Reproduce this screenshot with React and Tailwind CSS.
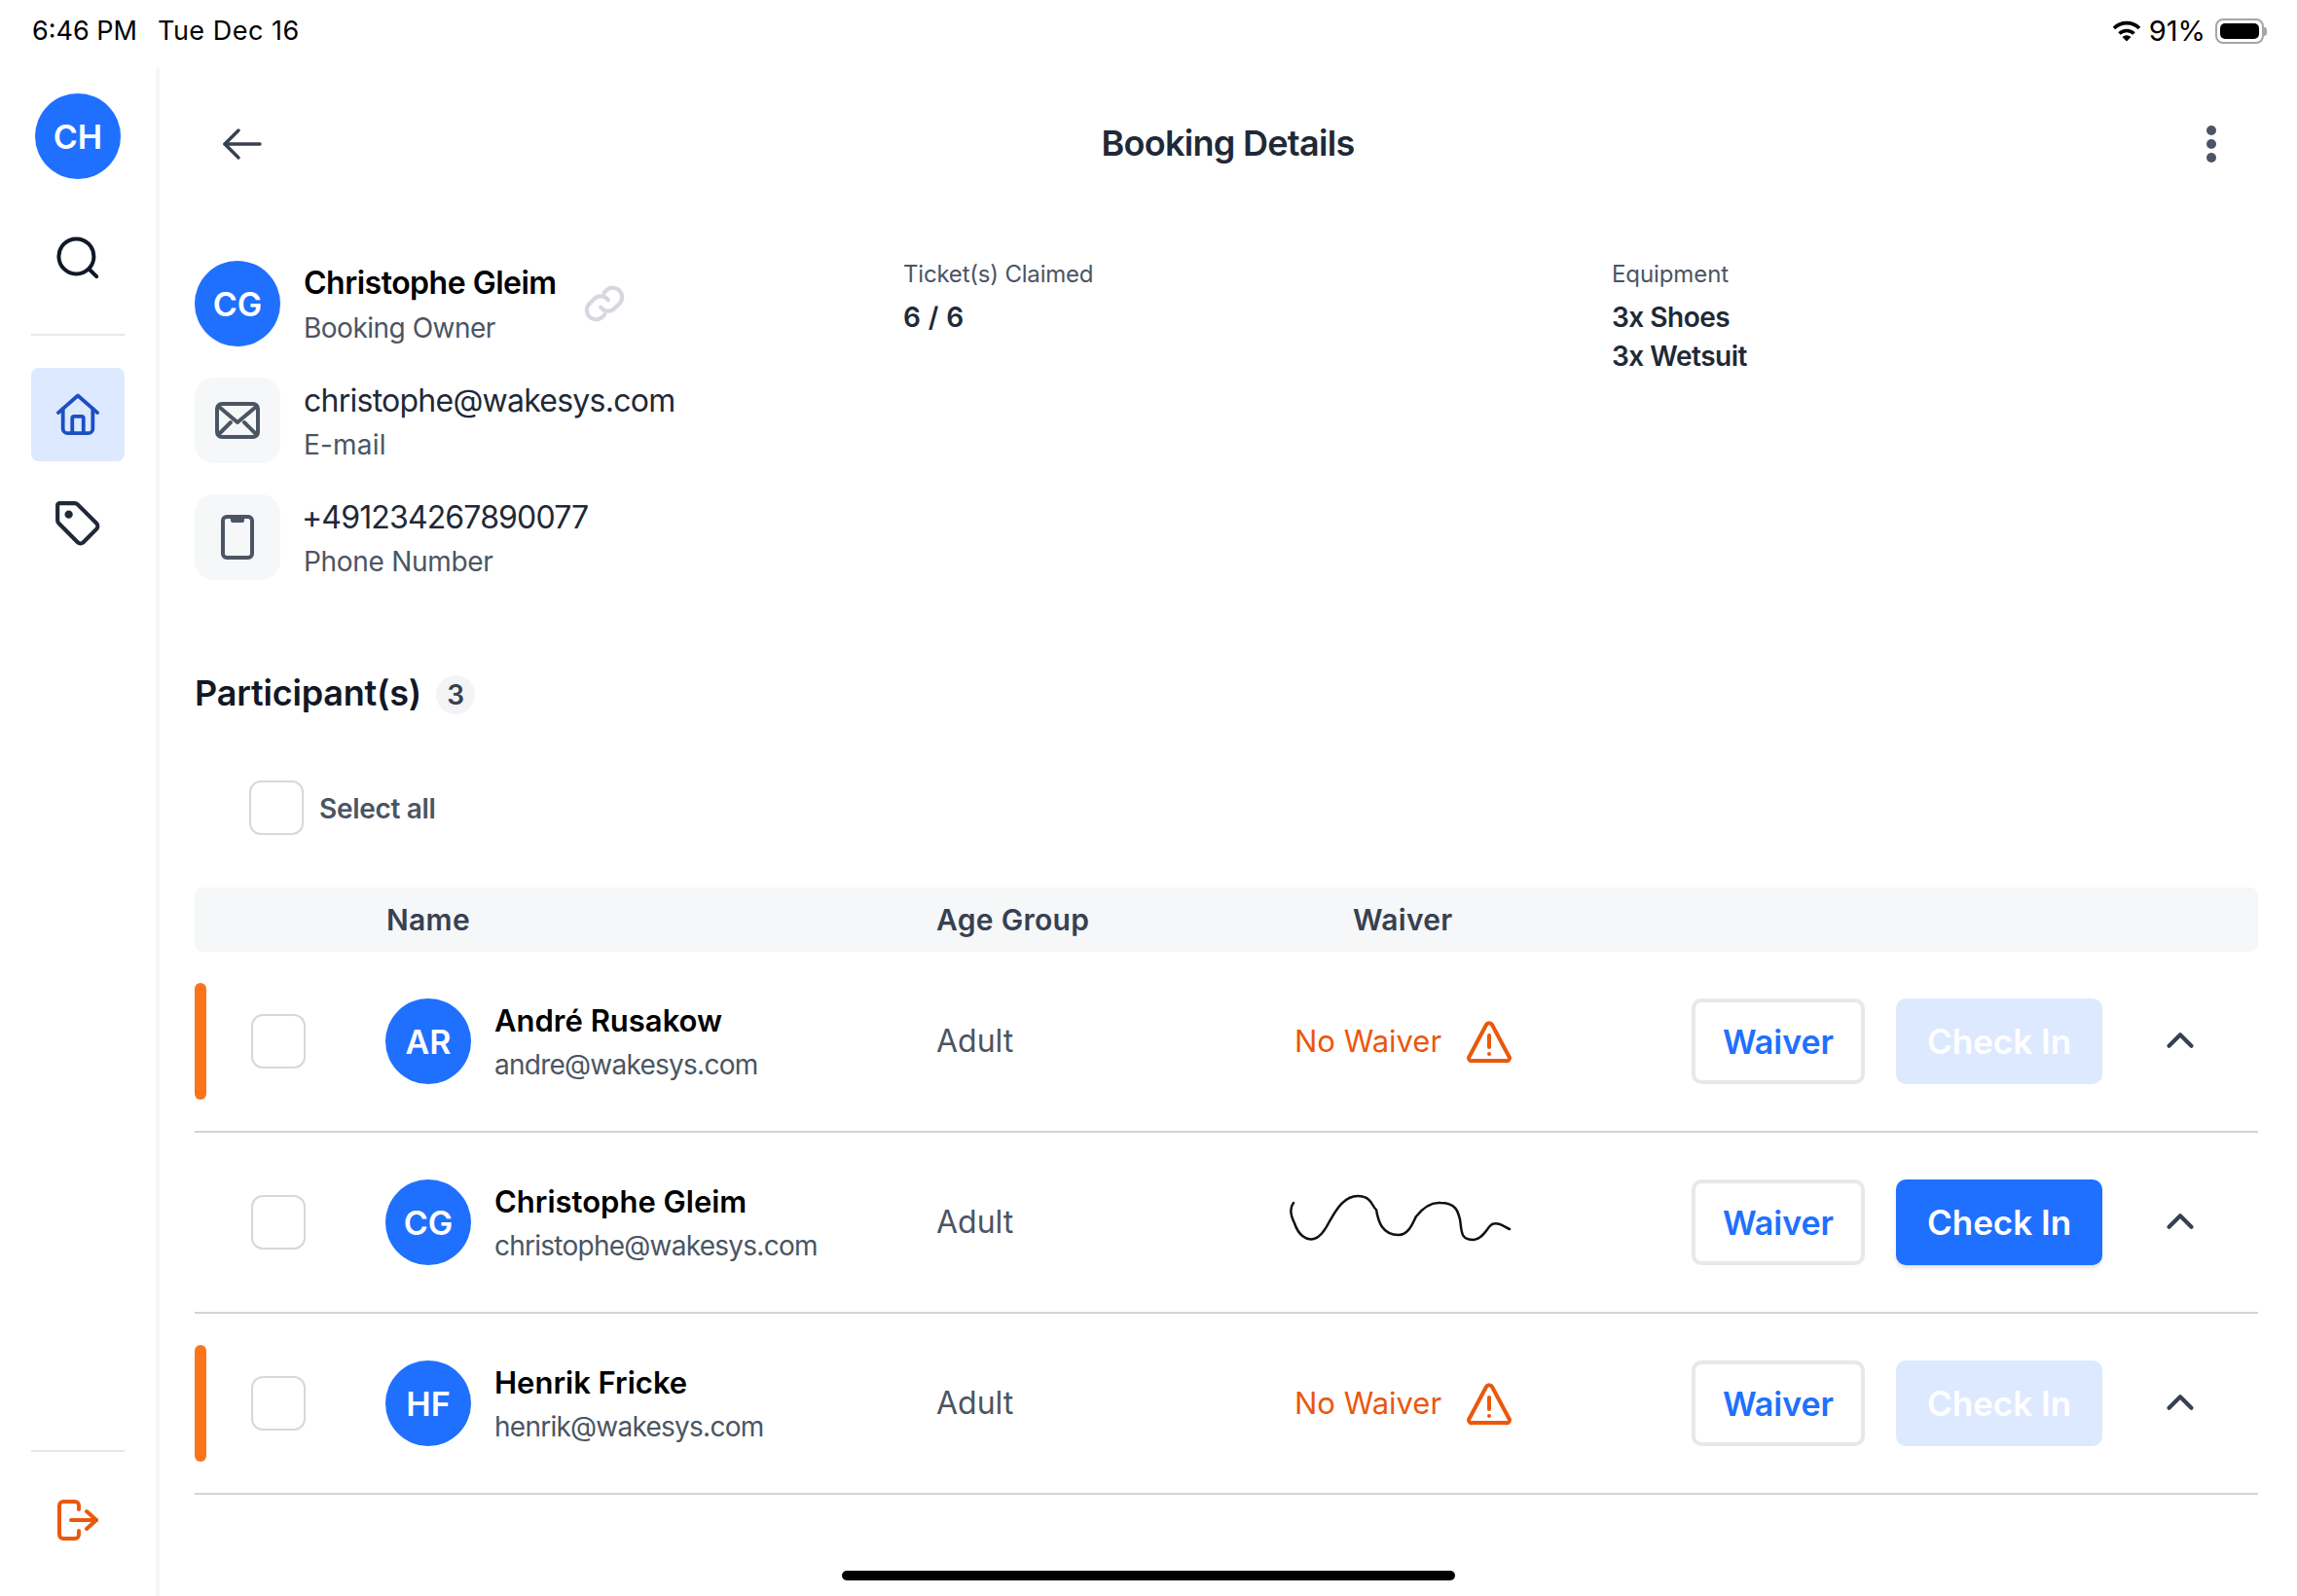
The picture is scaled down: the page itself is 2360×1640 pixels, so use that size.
import { ChevronUp } from "lucide-react";

const font = { fontFamily: '"Inter", "Noto Sans", sans-serif' };

const participantes = [
  { ini: "AR", nombre: "André Rusakow", email: "andre@wakesys.com", firmado: false },
  { ini: "CG", nombre: "Christophe Gleim", email: "christophe@wakesys.com", firmado: true },
  { ini: "HF", nombre: "Henrik Fricke", email: "henrik@wakesys.com", firmado: false },
];

function Avatar({ children }) {
  return (
    <div className="w-[88px] h-[88px] shrink-0 rounded-full bg-[#1f70ff] text-white flex items-center justify-center text-[34px] font-semibold">
      {children}
    </div>
  );
}

function Casilla() {
  return <div className="w-[56px] h-[56px] shrink-0 rounded-[12px] border-2 border-[#d5d8de] bg-white" />;
}

function Fila({ p }) {
  return (
    <div className="flex items-center h-[186px] border-b-2 border-[#d1d5db]">
      <div className="w-[58px] shrink-0">
        {!p.firmado && <div className="w-[12px] h-[120px] rounded-full bg-[#fb7419]" />}
      </div>
      <Casilla />
      <div className="w-[82px] shrink-0" />
      <div className="w-[566px] shrink-0 flex items-center gap-[24px]">
        <Avatar>{p.ini}</Avatar>
        <div className="pt-[2px]">
          <div className="text-[31px] leading-[46px] font-semibold text-black">{p.nombre}</div>
          <div className="text-[28px] leading-[44px] text-[#4b5563] tracking-[-0.75px]">{p.email}</div>
        </div>
      </div>
      <div className="w-[368px] shrink-0 text-[32px] text-[#4b5563]">Adult</div>
      <div className="w-[408px] shrink-0">
        {p.firmado ? (
          <svg width="240" height="56" viewBox="0 0 240 56" fill="none" className="-ml-[10px] -mt-[6px]">
            <path
              d="M9 11 C5 16 6 24 10 32 C14 44 22 50 30 48 C38 46 43 36 46 30 C52 20 60 4 75 4 C90 4 90 16 94 18 C96 30 100 44 117 44 C128 44 132 30 135 25 C142 16 150 10 160 11 C176 11 178 20 180 28 C182 40 180 49 194 49 C204 48 208 36 213 33 C220 30 226 36 231 38"
              stroke="#111"
              strokeWidth="2.5"
              strokeLinecap="round"
            />
          </svg>
        ) : (
          <div className="flex items-center gap-[26px]">
            <span className="text-[31px] text-[#ea580c]">No Waiver</span>
            <svg width="46" height="44" viewBox="0 0 46 44" fill="none" stroke="#ea580c" strokeWidth="4" strokeLinecap="round" strokeLinejoin="round" className="mt-[2px]">
              <path d="M20 4 3 36a3 3 0 0 0 3 5h34a3 3 0 0 0 3-5L26 4a3.400 3.400 0 0 0-6 0Z" />
              <path d="M23 15v12" />
              <path d="M23 34h.01" />
            </svg>
          </div>
        )}
      </div>
      <button className="w-[178px] h-[88px] shrink-0 rounded-[10px] border-[4px] border-[#e8e8e8] bg-white text-[#1f70ff] text-[34px] font-semibold">
        Waiver
      </button>
      <button
        className={
          p.firmado
            ? "ml-[32px] w-[212px] h-[88px] shrink-0 rounded-[10px] bg-[#1f70ff] text-white text-[35px] font-semibold shadow-md"
            : "ml-[32px] w-[212px] h-[88px] shrink-0 rounded-[10px] bg-[#dde9ff] text-white text-[35px] font-semibold"
        }
      >
        Check In
      </button>
      <div className="flex-1 flex justify-center -mt-[2px]">
        <ChevronUp size={46} strokeWidth={2.2} className="text-[#374151]" />
      </div>
    </div>
  );
}

export default function App() {
  return (
    <div style={font} className="relative w-[2360px] h-[1640px] bg-white overflow-hidden flex flex-col text-[#111827]">
      {/* Barra de estado */}
      <div className="h-[64px] shrink-0 flex items-center justify-between pl-[33px] pr-[31px] text-black">
        <div className="flex gap-[21px] text-[27px]">
          <span>6:46 PM</span>
          <span className="tracking-[0.5px]">Tue Dec 16</span>
        </div>
        <div className="flex items-center gap-[8px] text-[29px]">
          <svg width="30" height="22" viewBox="0 0 30 22" fill="none" stroke="black" strokeWidth="3.600">
            <path d="M2 8a18.500 18.500 0 0 1 26 0" />
            <path d="M7.500 13.500a10.800 10.800 0 0 1 15 0" />
            <path d="M15 21.500 10.500 17a6.400 6.400 0 0 1 9 0Z" fill="black" stroke="none" />
          </svg>
          <span>91%</span>
          <div className="flex items-center ml-[2px]">
            <div className="w-[50px] h-[26px] rounded-[8px] border-2 border-[#a3a5aa] p-[3px]">
              <div className="w-full h-full rounded-[5px] bg-black" />
            </div>
            <div className="w-[3px] h-[9px] rounded-r-full bg-[#a3a5aa]" />
          </div>
        </div>
      </div>

      <div className="flex-1 flex min-h-0">
        {/* Barra lateral */}
        <aside className="w-[164px] shrink-0 mt-[6px] border-r-[4px] border-[#f5f6f8] flex flex-col items-start pl-[32px] pr-[32px] pt-[26px] pb-[57px]">
          <div className="w-[88px] h-[88px] ml-[4px] rounded-full bg-[#1f70ff] text-white flex items-center justify-center text-[34px] font-semibold">
            CH
          </div>
          <div className="w-[96px] flex justify-center mt-[57px]">
            <svg width="48" height="48" viewBox="0 0 24 24" fill="none" stroke="#111827" strokeWidth="2" strokeLinecap="round">
              <circle cx="11.2" cy="11.2" r="9" />
              <path d="m18 18 3.6 3.6" />
            </svg>
          </div>
          <div className="w-[96px] h-[2px] bg-[#e7e8ea] mt-[54px]" />
          <div className="w-[96px] h-[96px] mt-[33px] rounded-[8px] bg-[#dde9ff] flex items-center justify-center">
            <svg width="46" height="46" viewBox="0 0 24 24" fill="none" stroke="#1d4fc4" strokeWidth="2" strokeLinecap="round" strokeLinejoin="round">
              <path d="M1.5 11 12 1.8 22.5 11" />
              <path d="M4 9v10.5A2.5 2.5 0 0 0 6.500 22h11a2.500 2.500 0 0 0 2.500-2.500V9" />
              <path d="M9 22v-8a1 1 0 0 1 1-1h4a1 1 0 0 1 1 1v8" />
            </svg>
          </div>
          <div className="w-[96px] flex justify-center mt-[39px]">
            <svg width="50" height="50" viewBox="0 0 24 24" fill="none" stroke="#1f2937" strokeWidth="2" strokeLinecap="round" strokeLinejoin="round">
              <path d="M3 2h7.500a2 2 0 0 1 1.400.6l9.300 9.300a2 2 0 0 1 0 2.800l-6.500 6.500a2 2 0 0 1-2.800 0L2.600 11.900A2 2 0 0 1 2 10.500V3a1 1 0 0 1 1-1Z" />
              <circle cx="7.500" cy="7.500" r="1" fill="#1f2937" />
            </svg>
          </div>
          <div className="mt-auto w-[96px] h-[2px] bg-[#e7e8ea]" />
          <div className="w-[96px] flex justify-center mt-[49px]">
            <svg width="42" height="42" viewBox="0 0 42 42" fill="none" stroke="#ea580c" strokeWidth="4" strokeLinecap="round" strokeLinejoin="round">
              <path d="M22 10V6a4 4 0 0 0-4-4H6a4 4 0 0 0-4 4v30a4 4 0 0 0 4 4h12a4 4 0 0 0 4-4v-4" />
              <path d="M14 21h26" />
              <path d="m30 12 10 9-10 9" />
            </svg>
          </div>
        </aside>

        {/* Contenido */}
        <main className="flex-1 min-w-0 pl-[36px] pr-[40px]">
          <div className="h-[166px] flex items-center justify-between">
            <svg width="44" height="44" viewBox="0 0 44 44" fill="none" stroke="#374151" strokeWidth="3.500" strokeLinecap="round" strokeLinejoin="round" className="ml-[26px] mt-[2px]">
              <path d="M41 22H5" />
              <path d="M19 8 5 22l14 14" />
            </svg>
            <h1 className="text-[36px] font-semibold text-[#1f2937] tracking-[-0.7px] mr-[14px]">Booking Details</h1>
            <div className="w-[10px] mr-[43px] flex flex-col gap-[4px] mt-[2px]">
              <div className="w-[10px] h-[10px] rounded-full bg-[#4b5563]" />
              <div className="w-[10px] h-[10px] rounded-full bg-[#4b5563]" />
              <div className="w-[10px] h-[10px] rounded-full bg-[#4b5563]" />
            </div>
          </div>

          <div className="mt-[38px] flex">
            <div className="w-[728px] shrink-0 flex flex-col gap-[32px]">
              <div className="flex items-center h-[88px]">
                <Avatar>CG</Avatar>
                <div className="ml-[24px] pt-[4px]">
                  <div className="text-[32px] leading-[46px] font-semibold text-black tracking-[-0.5px]">Christophe Gleim</div>
                  <div className="text-[28px] leading-[46px] text-[#4b5563] tracking-[-0.5px]">Booking Owner</div>
                </div>
                <svg width="46" height="46" viewBox="0 0 24 24" fill="none" stroke="#d5d8de" strokeWidth="2.200" strokeLinecap="round" className="ml-[26px]">
                  <path d="M10 14a5 5 0 0 0 7.500.5l3-3a5 5 0 0 0-7-7l-1.700 1.700" />
                  <path d="M14 10a5 5 0 0 0-7.500-.5l-3 3a5 5 0 0 0 7 7l1.700-1.700" />
                </svg>
              </div>
              <div className="flex items-center h-[88px]">
                <div className="w-[88px] h-[88px] shrink-0 rounded-[20px] bg-[#f6f7f9] flex items-center justify-center">
                  <svg width="46" height="38" viewBox="0 0 46 38" fill="none" stroke="#4b5563" strokeWidth="4" strokeLinecap="round" strokeLinejoin="round">
                    <rect x="2" y="2" width="42" height="34" rx="5" />
                    <path d="m4 5 19 16L42 5" />
                    <path d="m4 33 12-12" />
                    <path d="m42 33-12-12" />
                  </svg>
                </div>
                <div className="ml-[24px] pt-[4px]">
                  <div className="text-[32px] leading-[46px] text-[#1f2937] tracking-[-0.75px]">christophe@wakesys.com</div>
                  <div className="text-[28px] leading-[44px] text-[#4b5563] tracking-[0.2px]">E-mail</div>
                </div>
              </div>
              <div className="flex items-center h-[88px]">
                <div className="w-[88px] h-[88px] shrink-0 rounded-[20px] bg-[#f6f7f9] flex items-center justify-center">
                  <svg width="34" height="46" viewBox="0 0 34 46" fill="none" stroke="#4b5563" strokeWidth="4" strokeLinecap="round" strokeLinejoin="round">
                    <rect x="2" y="2" width="30" height="42" rx="4" />
                    <path d="M12 4v2h10V4" />
                  </svg>
                </div>
                <div className="ml-[22px] pt-[4px]">
                  <div className="text-[32px] leading-[46px] text-[#1f2937] tracking-[-0.85px]">+491234267890077</div>
                  <div className="ml-[2px] text-[28px] leading-[44px] text-[#4b5563] tracking-[-0.3px]">Phone Number</div>
                </div>
              </div>
            </div>
            <div className="w-[728px] shrink-0">
              <div className="text-[24px] leading-[28px] text-[#4b5563] tracking-[-0.2px]">Ticket(s) Claimed</div>
              <div className="mt-[10px] text-[28px] leading-[40px] font-semibold text-[#1f2937] tracking-[0.4px]">6 / 6</div>
            </div>
            <div>
              <div className="text-[24px] leading-[28px] text-[#4b5563] tracking-[-0.1px]">Equipment</div>
              <div className="mt-[10px] text-[28px] leading-[40px] font-semibold text-[#1f2937] tracking-[-0.5px]">
                <div>3x Shoes</div>
                <div>3x Wetsuit</div>
              </div>
            </div>
          </div>

          <div className="mt-[92px] h-[48px] flex items-center gap-[15px]">
            <h2 className="text-[36px] font-semibold text-[#111827] tracking-[-0.2px]">Participant(s)</h2>
            <span className="w-[40px] h-[40px] mt-[3px] rounded-full bg-[#f3f4f6] flex items-center justify-center text-[28px] font-semibold text-[#374151]">3</span>
          </div>

          <div className="mt-[66px] ml-[56px] flex items-center gap-[16px]">
            <Casilla />
            <span className="text-[28px] font-semibold text-[#4b5563] tracking-[-0.3px] mt-[1px]">Select all</span>
          </div>

          <div className="mt-[54px] h-[66px] rounded-[8px] bg-[#f6f7f9] flex items-center text-[30px] font-semibold text-[#374151] tracking-[0.3px]">
            <div className="w-[762px] shrink-0 pl-[197px] pt-[1px]">Name</div>
            <div className="w-[428px] shrink-0 pt-[1px]">Age Group</div>
            <div className="pt-[1px]">Waiver</div>
          </div>

          {participantes.map(p => (
            <Fila key={p.ini} p={p} />
          ))}
        </main>
      </div>

      {/* Indicador de inicio */}
      <div className="absolute left-[865px] bottom-[16px] w-[630px] h-[10px] rounded-full bg-black" />
    </div>
  );
}
